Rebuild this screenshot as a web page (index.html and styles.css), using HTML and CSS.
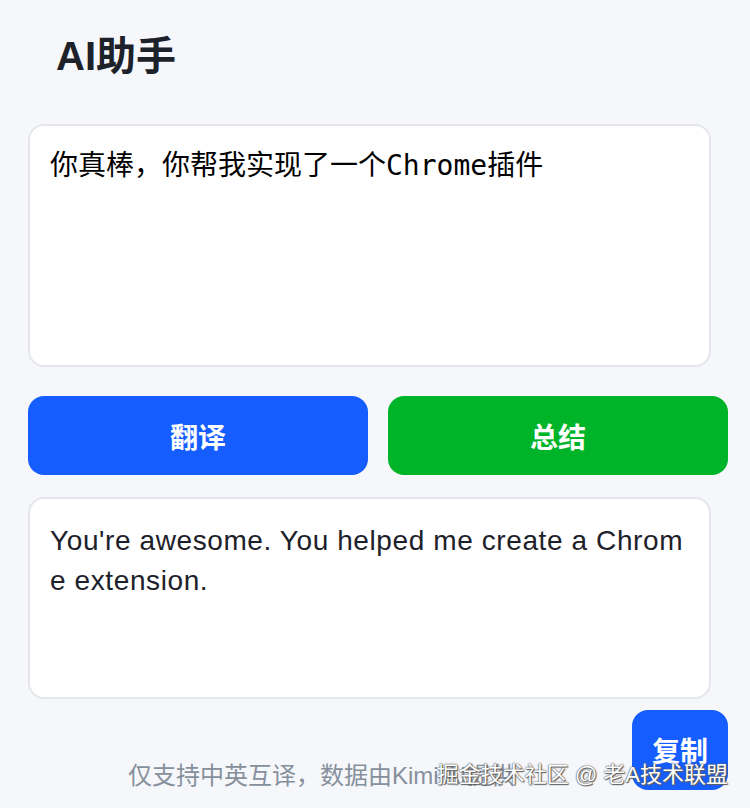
FILE: index.html
```html
<!DOCTYPE html>
<html lang="zh-CN">
<head>
<meta charset="utf-8">
<title>AI助手</title>
<link rel="stylesheet" href="styles.css">
</head>
<body>
<div class="app">
  <h1 class="title">AI助手</h1>
  <textarea class="input">你真棒，你帮我实现了一个Chrome插件</textarea>
  <div class="actions">
    <button class="btn btn-blue">翻译</button>
    <button class="btn btn-green">总结</button>
  </div>
  <div class="result">You're awesome. You helped me create a Chrome extension.</div>
  <div class="footer">
    <div class="note">仅支持中英互译，数据由Kimi AI提供</div>
    <button class="btn btn-blue copy">复制</button>
  </div>
</div>
<div class="watermark">掘金技术社区 @ 老A技术联盟</div>
</body>
</html>
```
FILE: styles.css
```css
html, body {
  margin: 0;
  padding: 0;
  background: #f5f7fb;
}
body {
  width: 750px;
  height: 808px;
  overflow: hidden;
  position: relative;
  font-family: "Liberation Sans", "Noto Sans CJK SC", sans-serif;
}
.app {
  width: 700px;
  padding: 28px 22px 0 28px;
}
.title {
  margin: 0 0 40px 28px;
  height: 56px;
  line-height: 56px;
  font-size: 40px;
  font-weight: bold;
  color: #1d2129;
}
.input {
  display: block;
  box-sizing: border-box;
  width: 683px;
  height: 243px;
  margin: 0;
  padding: 20px 20px;
  border: 2px solid #e5e6eb;
  border-radius: 16px;
  background: #fff;
  font-family: "DejaVu Sans Mono", "Noto Sans CJK SC", monospace;
  font-size: 28px;
  line-height: 40px;
  color: #000;
  resize: none;
  outline: none;
}
.actions {
  margin-top: 29px;
  display: grid;
  grid-template-columns: 1fr 1fr;
  gap: 20px;
}
.btn {
  border: none;
  border-radius: 16px;
  color: #fff;
  font-family: "Liberation Sans", "Noto Sans CJK SC", sans-serif;
  font-size: 28px;
  font-weight: bold;
  height: 79px;
  padding: 0;
  cursor: pointer;
}
.btn-blue { background: #165dff; }
.btn-green { background: #00b42a; }
.result {
  box-sizing: border-box;
  width: 683px;
  height: 202px;
  margin-top: 22px;
  padding: 22px 20px;
  border: 2px solid #e5e6eb;
  border-radius: 16px;
  background: #fff;
  font-size: 28px;
  line-height: 40px;
  letter-spacing: 0.6px;
  color: #1d2129;
  word-break: break-all;
}
.footer {
  margin-top: 11px;
  display: flex;
  align-items: flex-end;
}
.note {
  flex: 1;
  padding-left: 100px;
  font-size: 24px;
  line-height: 34px;
  color: #86909c;
  margin-bottom: -3px;
}
.copy {
  width: 96px;
  height: 80px;
}
.watermark {
  position: absolute;
  right: 22px;
  top: 760px;
  font-size: 22px;
  line-height: 30px;
  color: #fff;
  text-shadow: 0 0 2px #555, 0 0 1px #555, 1px 1px 1px #666;
}
```
